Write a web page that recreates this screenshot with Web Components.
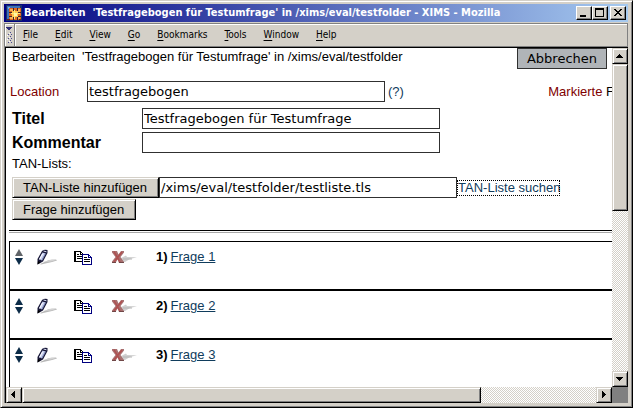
<!DOCTYPE html>
<html lang="de">
<head>
<meta charset="utf-8">
<title>XIMS</title>
<style>
html,body{margin:0;height:100%;overflow:hidden}
body{font:13px/16px "Liberation Sans",sans-serif;color:#000}
</style>
</head>
<body>
<app-window></app-window>
<script>
const define = (name, html, init) => {
  const t = document.createElement('template');
  t.innerHTML = html;
  customElements.define(name, class extends HTMLElement {
    constructor() {
      super();
      this.attachShadow({mode: 'open'}).append(t.content.cloneNode(true));
    }
    connectedCallback() { if (init) init(this, this.shadowRoot); }
  });
};
const bevel = 'border:1px solid;border-color:#d4d0c8 #000 #000 #d4d0c8;box-shadow:inset 1px 1px #fff,inset -1px -1px #808080;background:#d4d0c8;';

define('window-button', `<style>
:host{display:block}
button{display:block;box-sizing:border-box;width:16px;height:14px;padding:0;border:1px solid;border-color:#fff #000 #000 #fff;box-shadow:inset -1px -1px #808080;background:#d4d0c8}
svg{display:block}
</style><button><svg width="14" height="12" fill="none" stroke="#000" shape-rendering="crispEdges"><path/></svg></button>`, (h, r) => {
  const d = {min: 'M3 9h6M3 8h6', max: 'M2 1.5h9M2 2.5h9M2.5 1v9M10.5 1v9M2 9.5h9', close: 'M3 2h2v1h1v1h2v-1h1v-1h2v1h-1v1h-1v1h-1v1h1v1h1v1h1v1h-2v-1h-1v-1h-2v1h-1v1h-2v-1h1v-1h1v-1h1v-1h-1v-1h-1v-1h-1z'}[h.getAttribute('kind')];
  const p = r.querySelector('path');
  p.setAttribute('d', d);
  if (h.getAttribute('kind') === 'close') { p.setAttribute('fill', '#000'); p.setAttribute('stroke', 'none'); }
  r.querySelector('button').setAttribute('aria-label', h.getAttribute('label'));
});

define('title-bar', `<style>
:host{display:flex;align-items:center;height:18px;padding:0 2px;background:linear-gradient(90deg,#000080,#a6caf0);color:#fff;font:bold 11px/16px "DejaVu Sans Condensed","DejaVu Sans",sans-serif;white-space:pre}
h1{font:inherit;margin:0 0 0 2px;flex:1;min-width:0;overflow:hidden}
svg{flex:none}
.b{display:flex}
.b :last-child{margin-left:2px}
</style>
<svg width="16" height="16" shape-rendering="crispEdges"><rect width="16" height="16" fill="#18306c"/><path d="M1 1h13v2h-11v12h-2z" fill="#3c70b8"/><path d="M2 2h2v2h-2z" fill="#78b0e0"/><path d="M3 3h12v12h-12z" fill="#e06820"/><path d="M4 4h3v2h-3zM11 4h3v3h-3zM4 11h3v3h-3zM11 12h3v2h-3z" fill="#f8b050"/><path d="M7 3h1v12h-1zM11 3h1v12h-1zM3 7h12v1h-12zM3 11h12v1h-12z" fill="#402030"/><path d="M6 6h6v6h-6z" fill="#ffc850"/><path d="M8 5h1v9h-1zM5 8h9v1h-9z" fill="#ffe878"/><path d="M8 8h3v3h-3z" fill="#fff6a8"/><path d="M13 14h2v1h-2zM1 14h3v1h-3z" fill="#702020"/></svg>
<h1><slot></slot></h1>
<div class="b"><window-button kind="min" label="Minimieren"></window-button><window-button kind="max" label="Maximieren"></window-button><window-button kind="close" label="Schließen"></window-button></div>`);

define('menu-bar', `<style>
:host{display:flex;height:24px;box-sizing:border-box;margin-top:1px;background:#d4d0c8;border:1px solid #808080;box-shadow:inset 1px 1px #fff}
.grip{width:9px;border-right:1px solid #808080;box-shadow:1px 0 #fff;flex:none}
svg{display:block}
nav{display:flex;align-items:center;gap:1px}
</style><div class="grip"><svg width="9" height="22" shape-rendering="crispEdges"><path d="M1 3h6v1h-1v1h-1v1h-2v-1h-1v-1h-1z" fill="#303078"/><path d="M5 8h1v1h-1zM3 10h1v1h-1zM6 10h1v1h-1zM5 12h1v1h-1zM3 14h1v1h-1zM6 14h1v1h-1zM5 16h1v1h-1zM3 18h1v1h-1zM6 18h1v1h-1z" fill="#484890"/><path d="M4 9h1v1h-1zM2 11h1v1h-1zM4 13h1v1h-1zM2 15h1v1h-1zM4 17h1v1h-1z" fill="#fff"/></svg></div><nav><slot></slot></nav>`);

define('menu-item', `<style>
:host{display:block}
button{border:0;background:none;padding:0 8px;font:10px/16px "DejaVu Sans Condensed","DejaVu Sans",sans-serif;color:#000;display:block}
button::first-letter{text-decoration:underline;text-underline-offset:2px}
</style><button><slot></slot></button>`);

define('scroll-bar', `<style>
:host{display:flex;background:repeating-conic-gradient(#d4d0c8 0 25%,#fff 0 50%) 0 0/2px 2px;min-width:0;min-height:0}
:host([vertical]){flex-direction:column}
button,.thumb{box-sizing:border-box;${bevel}padding:0;flex:none}
button{width:16px;height:16px;display:grid;place-items:center}
:host([vertical]) .thumb{height:48%}
:host(:not([vertical])) .thumb{width:80%}
.run{flex:1;display:flex;flex-direction:inherit}
svg{display:block}
</style><button><svg width="8" height="8" shape-rendering="crispEdges"><path/></svg></button><div class="run"><div class="thumb"></div></div><button><svg width="8" height="8" shape-rendering="crispEdges"><path/></svg></button>`, (h, r) => {
  const v = h.hasAttribute('vertical'), p = r.querySelectorAll('path'), b = r.querySelectorAll('button');
  p[0].setAttribute('d', v ? 'M3 2h1v1h1v1h1v1h1v1h-7v-1h1v-1h1v-1h1z' : 'M5 0v7h-1v-1h-1v-1h-1v-1h-1v-1h1v-1h1v-1h1v-1z');
  p[1].setAttribute('d', v ? 'M0 2h7v1h-1v1h-1v1h-1v1h-1v-1h-1v-1h-1v-1h-1z' : 'M2 0h1v1h1v1h1v1h1v1h-1v1h-1v1h-1v1h-1z');
  b[0].setAttribute('aria-label', v ? 'Nach oben' : 'Nach links');
  b[1].setAttribute('aria-label', v ? 'Nach unten' : 'Nach rechts');
});

define('text-field', `<style>
:host{display:flex;align-items:center}
label{width:var(--label,130px);color:var(--label-color,#000);font:var(--label-font,bold 16px/20px "Liberation Sans",sans-serif)}
label:empty{display:none}
input{box-sizing:border-box;width:298px;height:21px;margin:0;padding:0 1px;border:1px solid #303030;border-radius:0;background:#fff;font:13px/16px "DejaVu Sans",sans-serif;color:#000;outline:0}
</style><label for="i"></label><input id="i" type="text">`, (h, r) => {
  r.querySelector('label').textContent = h.getAttribute('label') || '';
  const i = r.querySelector('input');
  i.value = h.getAttribute('value') || '';
  if (h.hasAttribute('hint')) i.setAttribute('aria-label', h.getAttribute('hint'));
});

define('push-button', `<style>
:host{display:block}
button{box-sizing:border-box;height:21px;margin:0;padding:0 11px 0 10px;${bevel}font:13px/16px "Liberation Sans",sans-serif;color:#000;display:block;white-space:nowrap}
:host([flat]) button{padding:0 9px;border:1px solid #303030;box-shadow:none;background:#b0b4b8;font-family:"DejaVu Sans",sans-serif}
</style><button><slot></slot></button>`);

define('question-row', `<style>
:host{display:flex;align-items:flex-start;height:49px;padding:7px 0 0 5px;box-sizing:border-box;border-bottom:2px solid #000}
a{color:#103c5c}
svg{display:block}
.ic{display:block;flex:none}
.mv{width:22px}.ed{width:37px}.cp{width:38px}.rm{width:44px}
p{margin:0;white-space:nowrap}
p b{margin-right:3px}
</style>
<a class="ic mv" href="#" aria-label="Verschieben"><svg width="8" height="17"><path class="up" d="M4 0L8 7H0z" fill="#0c2c48"/><path d="M0 9H8L4 16z" fill="#0c2c48"/></svg></a>
<a class="ic ed" href="#" aria-label="Bearbeiten"><svg width="21" height="17"><path d="M3 15L12 11l7-.5 1 1-5 1.500-11 2.500z" fill="#b8b8b8"/><path d="M6 13l9-2.500 4 .6-5 1.400z" fill="#d4d4d4"/><path d="M.5 15.500V10L5 2Q7 0 10.500 1V4L6 12.500z" fill="#181838"/><path d="M2 10L5.500 3.500 8.500 4.500 5 11.500z" fill="#c8d0f0"/><path d="M5 11L8.500 4.500" stroke="#7480b0"/><path d="M2.500 10.500L5.500 5" stroke="#fff"/><path d="M.5 15.500L1 12l2.500 1.500z" fill="#000"/><path d="M6.500 2l3 .8" stroke="#d8dcf4"/></svg></a>
<a class="ic cp" href="#" aria-label="Kopieren"><svg width="20" height="17" shape-rendering="crispEdges"><path d="M.5 2.500H6.500L9.500 5.500V12.500H.5z" fill="#fff" stroke="#000"/><path d="M1.500 2v10M6.500 2v3.500h3M3 5.500h2M3 7.500h5M3 9.500h5" stroke="#000" fill="none"/><path d="M8.500 5.500h6l3 3v7h-9z" fill="#fff" stroke="#000080"/><path d="M14.500 6v2.500h3" stroke="#000080" fill="none"/><path d="M10 8.500h3M10 10.500h6M10 12.500h6" stroke="#000"/></svg></a>
<a class="ic rm" href="#" aria-label="Löschen"><svg width="26" height="17"><path d="M9 9l5-2.500 1 1.500 10 .2-7 1.800-5 3h-3z" fill="#d0d0d0"/><path d="M11 10h9" stroke="#b4b4b4"/><path d="M0 2H5L6.500 5.500 9 2H12V3.500L8.500 8 12 13V14H7L5.500 10.500 3.500 14H0V12.500L3.500 8 0 3.500z" fill="#a87070"/><path d="M2 2.500l6 10.500M10 3L2 13" stroke="#b05050" stroke-width="1.500"/><path d="M0 13.500h4M7 13.500h5" stroke="#704848"/></svg></a>
<p><b class="n"></b><a href="#"><slot></slot></a></p>`, (h, r) => {
  r.querySelector('.n').textContent = h.getAttribute('n') + ')';
  if (h.getAttribute('n') === '1') r.querySelector('.up').setAttribute('fill', '#606468');
});

define('survey-page', `<style>
:host{display:block;background:#fff;overflow:hidden;min-width:0;min-height:0}
a{color:#103c5c}
.top{display:flex;justify-content:space-between;align-items:flex-start;padding:0 5px 0 6px;height:33px;white-space:pre}
h2{font:inherit;margin:1px 0 0}
.loc{display:flex;align-items:center;padding-left:4px;white-space:nowrap;--label:77px;--label-color:#800000;--label-font:13px/16px "Liberation Sans",sans-serif}
.loc a{margin-left:3px;text-decoration:none}
.mark{margin-left:auto;margin-right:-2px}
.mark em{font-style:normal;color:#800000}
.form{display:flex;flex-direction:column;align-items:flex-start;gap:3px;padding:6px 0 0 6px}
.lbl{margin:0}
.tan{display:flex;align-items:center;margin-top:2px;white-space:nowrap}
.tan a{text-decoration:none;outline:1px dotted #000;outline-offset:-1px;padding-left:1px}
.add{padding:1px 0 0 6px;display:flex}
hr{margin:10px 0 8px 3px;border:0;border-top:1px solid #000;border-bottom:1px solid #a8a8a8;height:1px}
.list{margin-left:3px;border-top:1px solid #000;border-left:1px solid #000}
</style>
<div class="top"><h2>Bearbeiten&nbsp; 'Testfragebogen für Testumfrage' in /xims/eval/testfolder</h2><push-button flat>Abbrechen</push-button></div>
<div class="loc"><text-field label="Location" value="testfragebogen"></text-field><a href="#">(?)</a><span class="mark"><em>Markierte</em> F</span></div>
<div class="form">
<text-field label="Titel" value="Testfragebogen für Testumfrage"></text-field>
<text-field label="Kommentar"></text-field>
<p class="lbl">TAN-Lists:</p>
<div class="tan"><push-button>TAN-Liste hinzufügen</push-button><text-field hint="TAN-Liste" value="/xims/eval/testfolder/testliste.tls"></text-field><a href="#">TAN-Liste suchen</a></div>
</div>
<div class="add"><push-button>Frage hinzufügen</push-button></div>
<hr>
<div class="list"><question-row n="1">Frage 1</question-row><question-row n="2">Frage 2</question-row><question-row n="3">Frage 3</question-row></div>`);

define('app-window', `<style>
:host{display:flex;flex-direction:column;box-sizing:border-box;height:100vh;padding:3px 4px 4px 3px;background:#d4d0c8;border:1px solid;border-color:#d4d0c8 #000 #000 #d4d0c8;box-shadow:inset 1px 1px #fff,inset -1px -1px #808080}
.view{flex:1;min-height:0;display:grid;grid-template:minmax(0,1fr) 16px/minmax(0,1fr) 16px;border:solid #000;border-width:1px 0 0 1px;box-shadow:-1px 0 #808080;margin-left:1px}
.corner{background:#808080}
</style>
<title-bar>Bearbeiten&nbsp; 'Testfragebogen für Testumfrage' in /xims/eval/testfolder - XIMS - Mozilla</title-bar>
<menu-bar><menu-item>File</menu-item><menu-item>Edit</menu-item><menu-item>View</menu-item><menu-item>Go</menu-item><menu-item>Bookmarks</menu-item><menu-item>Tools</menu-item><menu-item>Window</menu-item><menu-item>Help</menu-item></menu-bar>
<div class="view"><survey-page></survey-page><scroll-bar vertical></scroll-bar><scroll-bar></scroll-bar><div class="corner"></div></div>`);
</script>
</body>
</html>
